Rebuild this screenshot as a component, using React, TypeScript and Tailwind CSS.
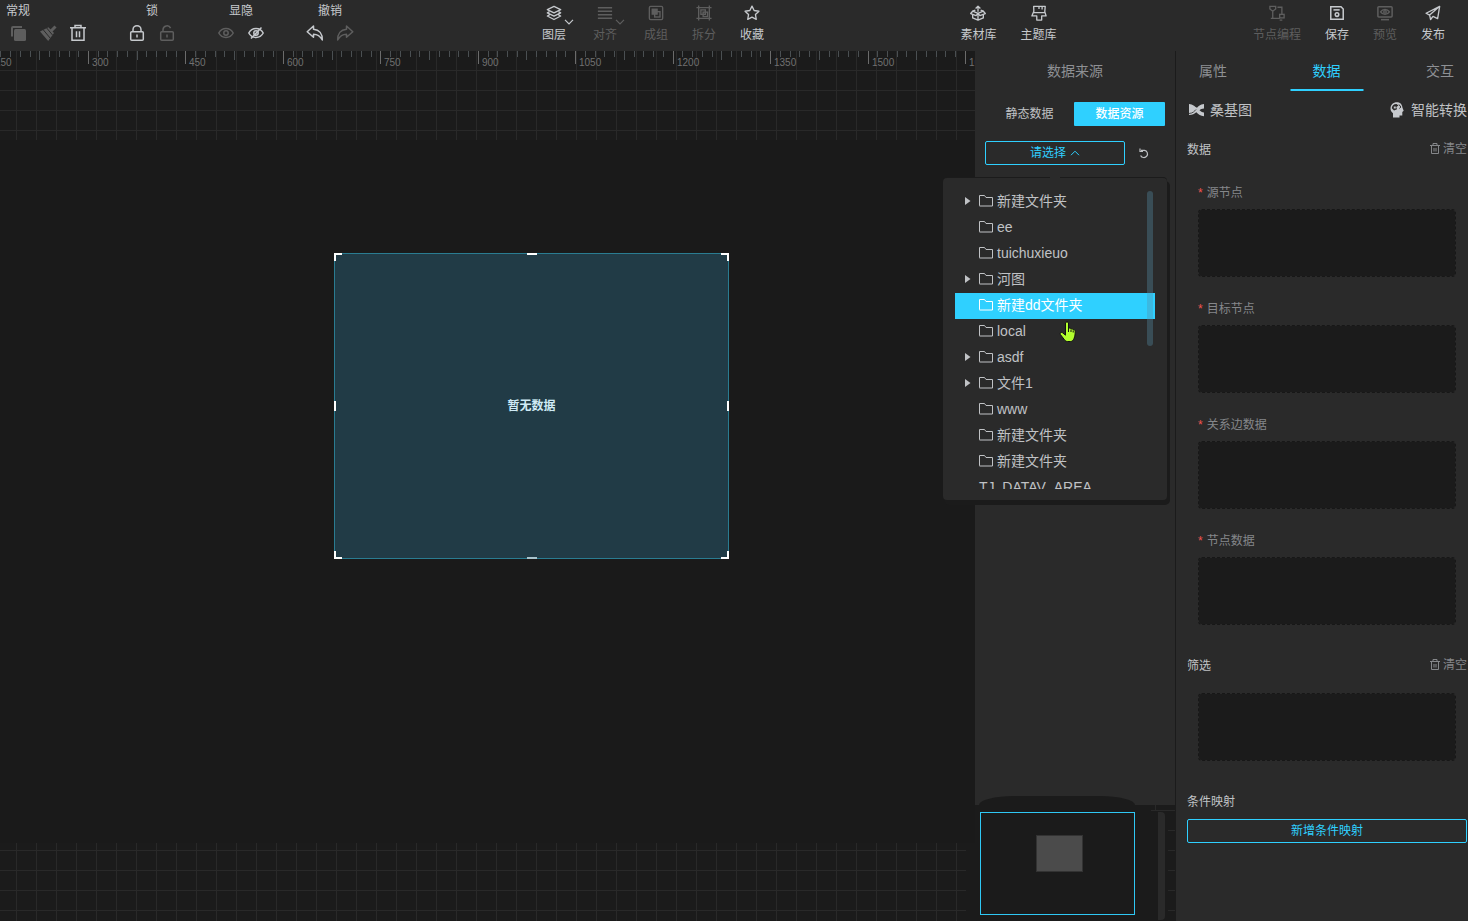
import { useState } from "react";
import type { ReactNode } from "react";
import clsx from "clsx";

const Icon = ({ children, size = 18 }: { children: ReactNode; size?: number }) => (
  <svg
    width={size}
    height={size}
    viewBox="0 0 18 18"
    fill="none"
    stroke="currentColor"
    strokeWidth="1.5"
    className="shrink-0"
    aria-hidden="true"
  >
    {children}
  </svg>
);

const icons = {
  copy: (
    <>
      <path d="M3 12.500V4a1 1 0 0 1 1-1h9" strokeWidth="2" />
      <rect x="5" y="5" width="12" height="12" rx="1.5" fill="currentColor" stroke="none" />
    </>
  ),
  brush: (
    <>
      <path d="M1 7.500 9.500 3.200 15 9 9.200 17Z" fill="currentColor" stroke="none" />
      <path d="m12 7 4.500-4.500" strokeWidth="3" />
      <path d="m4 5.500 7.500 9M7.500 3.800l6 7.200" stroke="#2a2a2a" strokeWidth="1" />
    </>
  ),
  trash: (
    <>
      <path d="M1 3.800h16M6 3.500V1.600h6v1.900M3 4v12.300h12V4" />
      <path d="M7.500 7.300v6M10.500 7.300v6" />
    </>
  ),
  lock: (
    <>
      <rect x="2.700" y="7.700" width="12.600" height="8.600" rx="1" />
      <path d="M5 7.500V5.700a4 4 0 0 1 8 0v1.800M9 10.500v3" />
    </>
  ),
  unlock: (
    <>
      <rect x="2.700" y="7.700" width="12.600" height="8.600" rx="1" />
      <path d="M5 7.500V5.700a4 4 0 0 1 7.600-1.600M9 10.500v3" />
    </>
  ),
  eye: (
    <>
      <path d="M1.800 9c3.200-6 11.200-6 14.400 0-3.200 6-11.200 6-14.400 0Z" />
      <circle cx="9" cy="9" r="2.200" />
    </>
  ),
  eyeOff: (
    <>
      <path d="M1.800 9c3.200-6 11.200-6 14.400 0-3.200 6-11.200 6-14.400 0Z" />
      <circle cx="9" cy="9" r="2.200" />
      <path d="M14.500 3.500 4 14.500" />
    </>
  ),
  undo: <path d="M7.500 2 1.200 7.700l6.300 5.600v-3c3.800 0 6.600 1.700 8.800 5.700.2-6-3-10.300-8.800-10.800Z" strokeLinejoin="round" />,
  redo: <path d="m10.500 2 6.300 5.700-6.300 5.600v-3c-3.800 0-6.600 1.700-8.800 5.700-.2-6 3-10.300 8.800-10.800Z" strokeLinejoin="round" />,
  layers: (
    <g strokeLinejoin="round">
      <path d="M9 1.500 16.500 5.200 9 8.900 1.500 5.200Z" />
      <path d="m4 7.500-2.500 1.300L9 12.600l7.500-3.800L14 7.500M4 11.100l-2.500 1.300L9 16.300l7.500-3.900-2.500-1.300" />
    </g>
  ),
  align: <path d="M1 3h16M1 7h16M1 11h16M1 15h16" strokeWidth="1.700" />,
  group: (
    <>
      <rect x="1.500" y="1.500" width="15" height="15" rx="1.500" />
      <rect x="4" y="4" width="7" height="7" fill="currentColor" stroke="none" />
      <rect x="7.500" y="7.500" width="6" height="6" />
    </>
  ),
  split: (
    <>
      <path d="M3 .5v17M15 .5v17M.5 3h17M.5 15h17" />
      <rect x="5.500" y="5.500" width="5" height="5" />
      <rect x="8" y="8" width="5" height="5" />
    </>
  ),
  star: <path d="m9 1.300 2.400 4.900 5.400.8-3.900 3.800.9 5.400L9 13.700l-4.800 2.500.9-5.400L1.200 7l5.400-.8Z" strokeLinejoin="round" />,
  box: (
    <g strokeLinejoin="round">
      <path d="M9 9.500 3 7 .8 9.600l6 2.400ZM9 9.500 15 7l2.200 2.600-6 2.400Z" />
      <path d="M3 11v3.500l6 2.500 6-2.500V11M9 10v7M3 7l3-1.300M15 7l-3-1.300" />
      <path d="M9 7.500V1.500M6.300 4 9 1.300 11.700 4" />
    </g>
  ),
  theme: (
    <path
      d="M3 1.500h13l-.5 6 1.500 4.800h-5V17H6.500v-4.700H1L3.200 7ZM3.200 8.500h12.500M9 1.500v3M12.500 1.500V5"
      strokeLinejoin="round"
    />
  ),
  nodes: (
    <>
      <path d="M1 1.500h6.500v3L4.200 7 1 4.500Z" />
      <rect x="12" y="10.500" width="5" height="4" />
      <path d="M4.200 7v8h8M2 15h3M9.500 2.500h5v8M12 17h3" />
    </>
  ),
  save: (
    <>
      <path d="M2 2h11.500L16 4.500V16H2Z" strokeWidth="1.700" />
      <path d="M5 5.500h7" strokeWidth="1.700" />
      <circle cx="9" cy="10.800" r="2" strokeWidth="1.700" />
    </>
  ),
  preview: (
    <>
      <rect x="1" y="2" width="16" height="11.500" rx="1" strokeWidth="1.700" />
      <path d="M4 7.800c2.400-3.700 7.600-3.700 10 0-2.400 3.700-7.600 3.700-10 0Z" />
      <circle cx="9" cy="7.800" r="1.400" />
      <path d="M4.500 16.500h9" strokeWidth="1.700" />
    </>
  ),
  publish: <path d="M16.500 1.500 1.200 9.300l4 2 11.300-9.800-2.300 13.800-5.200-2.500-2.700 3.500-1.100-5" strokeLinejoin="round" />,
};

type IconName = keyof typeof icons;

const toolGroups: { label: string; left?: boolean; tools: { icon: IconName; title: string; dim?: boolean }[] }[] = [
  {
    label: "常规",
    left: true,
    tools: [
      { icon: "copy", title: "复制", dim: true },
      { icon: "brush", title: "格式刷", dim: true },
      { icon: "trash", title: "删除" },
    ],
  },
  {
    label: "锁",
    tools: [
      { icon: "lock", title: "锁定" },
      { icon: "unlock", title: "解锁", dim: true },
    ],
  },
  {
    label: "显隐",
    tools: [
      { icon: "eye", title: "显示", dim: true },
      { icon: "eyeOff", title: "隐藏" },
    ],
  },
  {
    label: "撤销",
    tools: [
      { icon: "undo", title: "撤销" },
      { icon: "redo", title: "重做", dim: true },
    ],
  },
];

const ToolButton = ({ icon, label, dim, menu }: { icon: IconName; label: string; dim?: boolean; menu?: boolean }) => (
  <button
    className={clsx(
      "relative flex flex-col items-center gap-[6px] whitespace-nowrap",
      dim ? "text-[#5e5e5e]" : "text-[#c6c9cd]",
      menu && "mr-[3px]"
    )}
  >
    <Icon size={16}>{icons[icon]}</Icon>
    <span className="leading-4">{label}</span>
    {menu && (
      <svg width="10" height="6" viewBox="0 0 10 6" className="absolute top-[14px] -right-2" fill="none" stroke="currentColor">
        <path d="M1 .8 5 4.800 9 .8" strokeWidth="1.200" />
      </svg>
    )}
  </button>
);

const Header = () => (
  <header className="flex h-[51px] shrink-0 bg-[#2a2a2a] text-xs text-[#c6c9cd]">
    <div className="flex gap-[29px] pt-[3px] pl-[3px]">
      {toolGroups.map((g) => (
        <div key={g.label} className={clsx("flex flex-col gap-1", !g.left && "items-center")}>
          <span className={clsx("leading-4", g.left && "pl-[3px]")}>{g.label}</span>
          <div className="flex">
            {g.tools.map((t) => (
              <button
                key={t.icon}
                title={t.title}
                aria-label={t.title}
                className={clsx("flex h-5 w-[30px] items-center justify-center", t.dim && "text-[#5e5e5e]")}
              >
                <Icon>{icons[t.icon]}</Icon>
              </button>
            ))}
          </div>
        </div>
      ))}
    </div>
    <div className="ml-[182px] flex items-start gap-6 pt-[5px]">
      <ToolButton icon="layers" label="图层" menu />
      <ToolButton icon="align" label="对齐" dim menu />
      <ToolButton icon="group" label="成组" dim />
      <ToolButton icon="split" label="拆分" dim />
      <ToolButton icon="star" label="收藏" />
    </div>
    <div className="ml-auto flex items-start gap-6 pt-[5px]">
      <ToolButton icon="box" label="素材库" />
      <ToolButton icon="theme" label="主题库" />
    </div>
    <div className="ml-auto flex items-start gap-6 pt-[5px] pr-[23px]">
      <ToolButton icon="nodes" label="节点编程" dim />
      <ToolButton icon="save" label="保存" />
      <ToolButton icon="preview" label="预览" dim />
      <ToolButton icon="publish" label="发布" />
    </div>
  </header>
);

// One major mark every 150 units, ten steps between two of them
const STEP = 9.744;
const ORIGIN = 88.5 - 20 * STEP;
const marks = [150, 300, 450, 600, 750, 900, 1050, 1200, 1350, 1500, 1650];

const Ruler = () => (
  <svg className="block h-[19px] w-full" aria-label="标尺">
    {Array.from({ length: 120 }, (_, i) => {
      const x = Math.floor(ORIGIN + i * STEP) + 0.5;
      const h = i % 10 === 0 ? 13 : i % 5 === 0 ? 9 : 6;
      return <path key={i} d={`M${x} 0v${h}`} stroke={i % 10 === 0 ? "#6b6b6b" : "#4a4f52"} />;
    })}
    {marks.map((m) => (
      <text key={m} x={Math.floor(ORIGIN + (m / 15) * STEP) + 4} y="15" fontSize="10" fill="#707070">
        {m}
      </text>
    ))}
  </svg>
);

const GRID =
  "bg-[linear-gradient(to_right,#292929_1px,transparent_1px),linear-gradient(to_bottom,#292929_1px,transparent_1px)] bg-[size:20px_20px]";

const Stage = () => (
  <main className="relative flex min-w-0 flex-1 flex-col overflow-hidden bg-[#1b1b1b]">
    <div className={clsx("h-[89px] bg-position-[16px_19px]", GRID)}>
      <Ruler />
    </div>
    <div className="flex-1 bg-[#1a1a1a]" />
    <div className={clsx("mr-[9px] h-[78px] bg-position-[16px_7px]", GRID)} />

    {/* Selected widget on the free canvas */}
    <div className="absolute top-[202px] left-[334px] flex h-[306px] w-[395px] items-center justify-center border border-[#2a7c91] bg-[#213b46]">
      <span className="text-xs font-bold text-[#cfeaf5]">暂无数据</span>
      <i className="absolute -top-px -left-px size-2 border-t-2 border-l-2 border-white" />
      <i className="absolute -top-px -right-px size-2 border-t-2 border-r-2 border-white" />
      <i className="absolute -bottom-px -left-px size-2 border-b-2 border-l-2 border-white" />
      <i className="absolute -right-px -bottom-px size-2 border-r-2 border-b-2 border-white" />
      <i className="absolute -top-px left-1/2 h-[2px] w-[10px] -translate-x-1/2 bg-white" />
      <i className="absolute -bottom-px left-1/2 h-[2px] w-[10px] -translate-x-1/2 bg-[#a9c4cd]" />
      <i className="absolute top-1/2 -left-px h-[10px] w-[2px] -translate-y-1/2 bg-white" />
      <i className="absolute top-1/2 -right-px h-[10px] w-[2px] -translate-y-1/2 bg-white" />
    </div>
  </main>
);

const nodes = [
  { name: "新建文件夹", open: true },
  { name: "ee" },
  { name: "tuichuxieuo" },
  { name: "河图", open: true },
  { name: "新建dd文件夹" },
  { name: "local" },
  { name: "asdf", open: true },
  { name: "文件1", open: true },
  { name: "www" },
  { name: "新建文件夹" },
  { name: "新建文件夹" },
  { name: "TJ_DATAV_AREA", table: true },
];

const SourceTree = () => {
  const [active, setActive] = useState(4);

  return (
    <div className="absolute top-[37px] left-1/2 z-20 w-[224px] -translate-x-1/2 rounded bg-[#2a2a2a] px-3 py-[11px] shadow-[0_-1px_0_#1b1b1b,2px_4px_0_1px_#1b1b1b]">
      <i className="absolute -top-1 left-1/2 h-1 w-[10px] -translate-x-1/2 bg-[#2a2a2a]" />
      <ul className="h-[300px] overflow-hidden text-sm text-[#c0c2c5]" role="tree">
        {nodes.map((n, i) => (
          <li key={i} role="treeitem" aria-selected={i === active}>
            <button
              onClick={() => setActive(i)}
              className={clsx(
                "flex h-[26px] w-full items-center pb-[2px] pl-[10px]",
                i === active && "bg-[#2fd0ff] text-white"
              )}
            >
              <span className="flex w-[14px] items-center">
                {n.open && (
                  <svg width="6" height="8" viewBox="0 0 6 8" fill="currentColor">
                    <path d="M0 0 5.500 4 0 8Z" />
                  </svg>
                )}
              </span>
              {!n.table && (
                <svg width="14" height="12" viewBox="0 0 14 12" fill="none" stroke="currentColor" className="mr-1 shrink-0">
                  <path d="M.5 10.500V.5h5l1.500 2h6.500v8.500H.5Z" />
                </svg>
              )}
              <span className="whitespace-nowrap">{n.name}</span>
            </button>
          </li>
        ))}
      </ul>
      <i className="absolute top-[13px] right-[14px] h-[155px] w-[6px] rounded-full bg-[#558fa8]/35" />
      {/* Pointer */}
      <svg width="18" height="22" viewBox="0 0 18 22" className="absolute top-[143px] left-[116px]">
        <path
          d="M6.500 2c0-1.500 3-1.500 3 0v5.500c1-.8 2.300-.4 2.500.5.900-.5 2-.1 2.200.8 1-.3 2 .2 2 1.400 0 2.800-.2 5.100-1.200 7.300-.8 1.800-1.900 3-3.500 3H8.500c-1.400 0-2.300-.7-3-1.700L1.400 13.500c-.8-1.400.8-2.700 2.200-1.700l2.900 2.400Z"
          fill="#b2ff2e"
          stroke="#111"
        />
        <path d="M9.500 7v4M12 8.500V11M14.200 9.500v2" stroke="#111" fill="none" />
      </svg>
    </div>
  );
};

const SourcePanel = () => (
  <aside className="flex w-[201px] shrink-0 flex-col border-r border-[#1b1b1b] bg-[#2a2a2a]">
    <h2 className="h-10 text-center text-sm leading-10 text-[#8e9094]">数据来源</h2>
    <div className="mt-[11px] flex px-[10px] text-xs">
      <button className="h-6 flex-1 text-[#c0c2c5]">静态数据</button>
      <button className="h-6 w-[91px] rounded-[1px] bg-[#2fd0ff] font-medium text-white">数据资源</button>
    </div>
    <div className="mt-[15px] flex px-[10px]">
      <div className="relative">
        <button
          aria-expanded="true"
          className="flex h-6 w-[140px] items-center justify-center gap-1 rounded-[2px] border border-[#2fd0ff] text-xs text-[#2fd0ff]"
        >
          请选择
          <svg width="10" height="6" viewBox="0 0 10 6" fill="none" stroke="currentColor">
            <path d="M1 5.200 5 1.200 9 5.200" />
          </svg>
        </button>
        <SourceTree />
      </div>
      <button aria-label="刷新" className="flex h-6 w-[38px] items-center justify-center text-[#c0c2c5]">
        <svg width="12" height="12" viewBox="0 0 12 12" fill="none" stroke="currentColor" strokeWidth="1.200">
          <path d="M2 1.500v3h3M3 3.400h3.500a3.600 3.600 0 1 1-3.900 5" />
        </svg>
      </button>
    </div>
    <Minimap />
  </aside>
);

const Minimap = () => (
  <div className="relative mt-auto flex h-[116px] justify-between bg-[#1b1b1b] pt-[7px] pl-[5px]">
    <i className="absolute -top-[9px] left-1 h-[9px] w-[156px] rounded-[35px_35px_0_0/9px_9px_0_0] bg-[#1b1b1b]" />
    <i className="absolute top-[5px] right-0 h-px w-6 bg-[#292929]" />
    <i className="absolute top-0 right-[19px] h-[5px] w-px bg-[#292929]" />
    <div className="h-[103px] w-[155px] border border-[#2fc8f5] pt-[22px] pl-[55px]">
      <div className="h-[37px] w-[47px] border border-[#333] bg-[#4b4b4b]" />
    </div>
    <div className="flex gap-[3px]">
      <i className="h-[108px] w-[7px] rounded-r-sm bg-[#2a2a2a]" />
      <i className="h-full w-[7px] bg-[linear-gradient(to_bottom,#292929_1px,transparent_1px)] bg-[size:20px_20px] bg-position-[0_18px]" />
    </div>
  </div>
);

const ClearButton = () => (
  <button className="flex items-center gap-[2px] text-[#85878a]">
    <svg width="12" height="12" viewBox="0 0 12 12" fill="none" stroke="currentColor">
      <path d="M1 2.500h10M4 2.500v-2h4v2M2.500 2.500v8h7v-8M5 5v3.500M7 5v3.500" />
    </svg>
    清空
  </button>
);

const DropZone = () => <div className="h-[68px] rounded border border-dashed border-[#171717] bg-[#1b1b1b] bg-clip-padding" />;

const tabs = ["属性", "数据", "交互"];
const fields = ["源节点", "目标节点", "关系边数据", "节点数据"];

const SettingsPanel = () => {
  const [tab, setTab] = useState("数据");

  return (
    <aside className="w-[292px] shrink-0 bg-[#2a2a2a] text-xs text-[#c0c2c5]">
      <nav className="flex h-10 justify-between overflow-hidden pr-[14px] pl-[23px]">
        {tabs.map((t) => (
          <button
            key={t}
            onClick={() => setTab(t)}
            className={clsx("relative text-sm", t === tab ? "text-[#2fd0ff]" : "text-[#8e9094]")}
          >
            {t}
            {t === tab && <i className="absolute bottom-0 left-1/2 h-[2px] w-[73px] -translate-x-1/2 bg-[#2fd0ff]" />}
          </button>
        ))}
      </nav>

      <div className="pr-px pl-[11px]">
        <div className="flex h-[38px] items-center justify-between text-sm">
          <span className="flex items-center gap-[5px]">
            <svg width="18" height="16" viewBox="0 0 18 16" fill="#c6c9cd">
              <path d="M2 2c4 .3 5.500 2.500 8 3.700C11.500 4 13 2.500 17 2v4.500c-2 .2-3.500.8-4.500 1.700 1.200 1.200 2.500 2 4.500 2.300v3.700c-3.500-.2-5.500-2-7.700-4C7.500 11.800 5.500 12.800 2 13Z" />
              <path d="M2 11.500c4-.3 5.500-2.300 7-4" fill="none" stroke="#2a2a2a" strokeWidth=".8" />
            </svg>
            桑基图
          </span>
          <button className="flex items-center gap-[6px]">
            <svg width="16" height="16" viewBox="0 0 16 16">
              <path
                d="M8 .3C4 .3 1.500 3 1.500 6.500c0 2.200 1 3.500 2.500 4.700v4.300h6.500v-2h2.800V10l1.400-1.200-1.200-3C13 2.500 11.300.3 8 .3Z"
                fill="#c6c9cd"
              />
              <path d="M7.500 2C4.500 2 2.800 4 2.800 6.300L5 8.600l3-1.300L7.300 5 9.500 3.600 7.500 2Z" fill="#2a2a2a" />
              <path d="M4.800 4.500h2v2h-2Z" fill="#c6c9cd" />
              <path d="M10 2.500 11.800 5 10.500 6.500" stroke="#2a2a2a" fill="none" />
            </svg>
            智能转换
          </button>
        </div>

        <div className="flex h-10 items-center justify-between">
          <h3 className="pt-[2px]">数据</h3>
          <ClearButton />
        </div>
        <div className="mt-4 flex flex-col gap-6 px-[11px]">
          {fields.map((f) => (
            <div key={f}>
              <p className="mb-2 leading-4 text-[#85878a]">
                <span className="mr-1 text-[#f0544f]">*</span>
                {f}
              </p>
              <DropZone />
            </div>
          ))}
        </div>

        <div className="mt-5 flex h-10 items-center justify-between">
          <h3 className="pt-[2px]">筛选</h3>
          <ClearButton />
        </div>
        <div className="mt-2 px-[11px]">
          <DropZone />
        </div>

        <h3 className="mt-[33px] leading-4">条件映射</h3>
        <button className="mt-[9px] h-6 w-full rounded-[2px] border border-[#2fd0ff] text-[#2fd0ff]">新增条件映射</button>
      </div>
    </aside>
  );
};

export default function App() {
  return (
    <div className="flex min-h-screen flex-col overflow-hidden bg-[#1b1b1b] font-['Liberation_Sans','Noto_Sans_CJK_SC',sans-serif]">
      <Header />
      <div className="flex flex-1">
        <Stage />
        <SourcePanel />
        <SettingsPanel />
      </div>
    </div>
  );
}
